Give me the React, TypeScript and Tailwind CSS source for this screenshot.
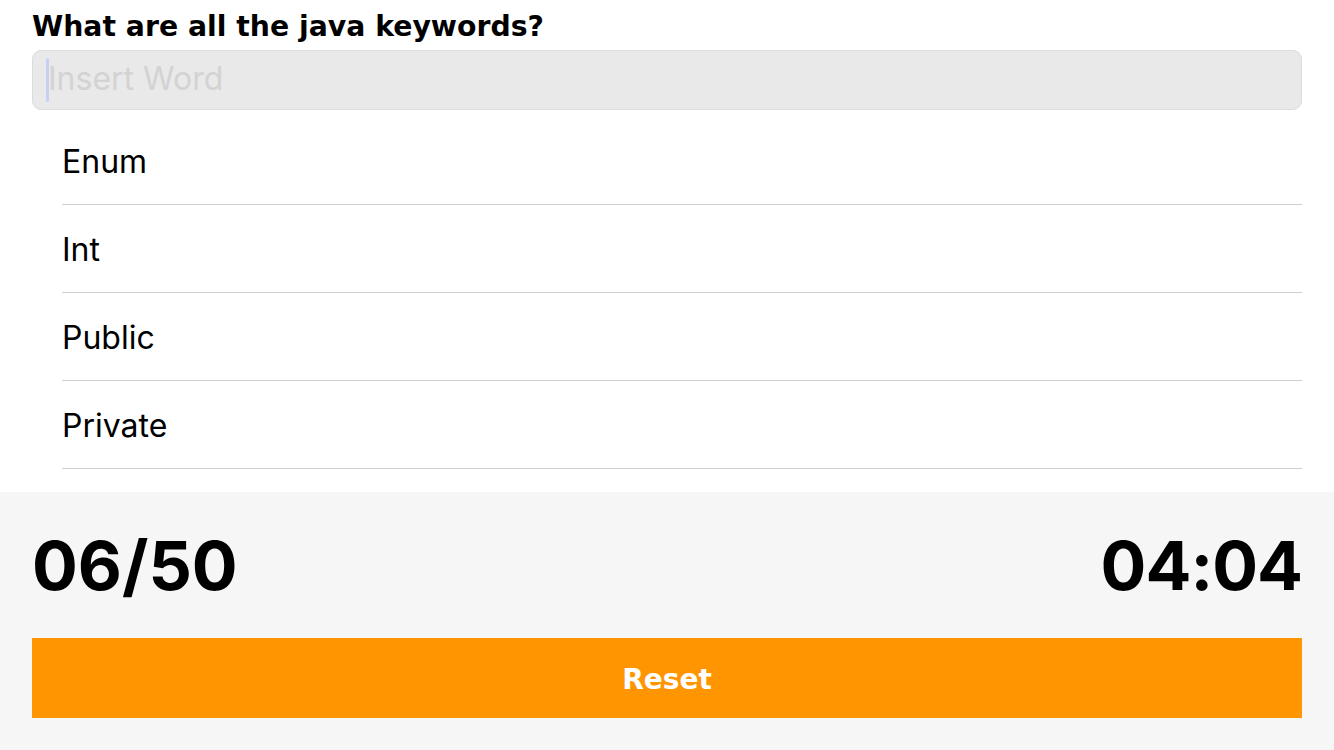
import React, { useState } from 'react';

const words = ['Enum', 'Int', 'Public', 'Private'];

export default function App() {
  const [value, setValue] = useState('');

  return (
    <div className="h-[750px] w-[1334px] bg-white flex flex-col overflow-hidden font-['Inter',sans-serif]">
      <div className="flex-1 flex flex-col px-8">
        <h1 className="pt-[10px] text-[28.3px] leading-[34px] font-bold text-black font-['DejaVu_Sans',sans-serif]">
          What are all the java keywords?
        </h1>
        <div className="mt-[6px] h-[60px] rounded-[9px] border border-[#dcdcdc] bg-[#e9e9e9] flex items-center pl-[13px] pr-[14px]">
          <div className="w-[3px] h-[44px] rounded-full bg-[#c6d0f6] shrink-0" />
          <input
            value={value}
            onChange={(e) => setValue(e.target.value)}
            placeholder="Insert Word"
            className="w-full -ml-[1px] pb-[2px] bg-transparent outline-none text-[32px] text-black placeholder:text-[#d3d3d3] font-['Inter',sans-serif]"
          />
        </div>
        <ul className="mt-[7px] pl-[30px]">
          {words.map((w) => (
            <li key={w} className="h-[88px] flex items-center border-b border-[#cfcfcf] text-[32px] text-black">
              <span className="pt-[2px]">{w}</span>
            </li>
          ))}
        </ul>
      </div>
      <div className="h-[258px] bg-[#f6f6f6] px-8 flex flex-col">
        <div className="flex justify-between items-center h-[146px] text-[68px] font-bold text-black leading-none">
          <span>06/50</span>
          <span className="tracking-[-1px]">04:04</span>
        </div>
        <button className="h-[80px] w-full pt-[3px] bg-[#ff9500] text-white text-[28px] font-bold font-['DejaVu_Sans',sans-serif]">
          Reset
        </button>
      </div>
    </div>
  );
}
